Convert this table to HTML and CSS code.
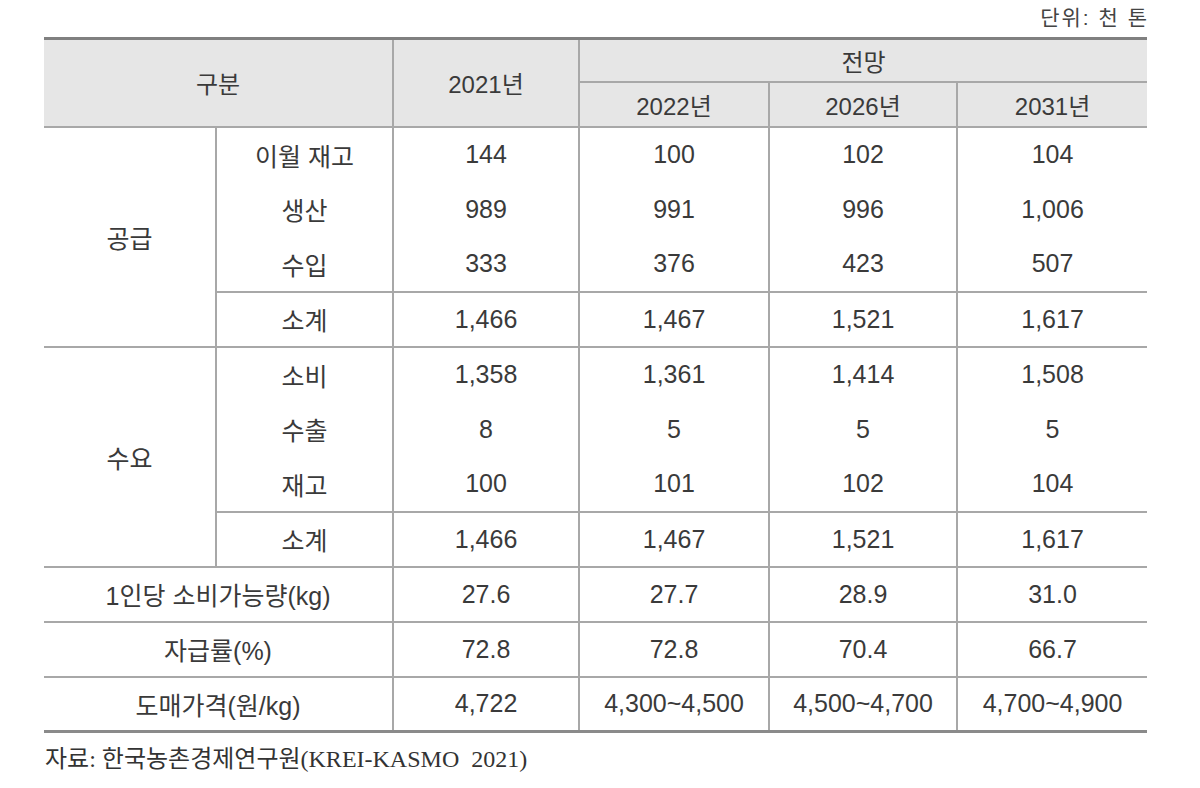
FILE: index.html
```html
<!DOCTYPE html>
<html lang="ko">
<head>
<meta charset="utf-8">
<title>수급 전망</title>
<link rel="stylesheet" href="styles.css">
</head>
<body>
<div class="page">
  <div class="unit">단위: 천 톤</div>
  <table class="grid">
    <colgroup>
      <col class="c1"><col class="c2"><col class="c3"><col class="c4"><col class="c5"><col class="c6">
    </colgroup>
    <thead>
      <tr class="h1">
        <th colspan="2" rowspan="2">구분</th>
        <th rowspan="2">2021년</th>
        <th colspan="3">전망</th>
      </tr>
      <tr class="h2">
        <th>2022년</th>
        <th>2026년</th>
        <th>2031년</th>
      </tr>
    </thead>
    <tbody>
      <tr class="in">
        <td rowspan="4" class="grp">공급</td>
        <td>이월 재고</td><td>144</td><td>100</td><td>102</td><td>104</td>
      </tr>
      <tr class="in"><td>생산</td><td>989</td><td>991</td><td>996</td><td>1,006</td></tr>
      <tr class="in last"><td>수입</td><td>333</td><td>376</td><td>423</td><td>507</td></tr>
      <tr class="sum"><td>소계</td><td>1,466</td><td>1,467</td><td>1,521</td><td>1,617</td></tr>
      <tr class="in">
        <td rowspan="4" class="grp">수요</td>
        <td>소비</td><td>1,358</td><td>1,361</td><td>1,414</td><td>1,508</td>
      </tr>
      <tr class="in"><td>수출</td><td>8</td><td>5</td><td>5</td><td>5</td></tr>
      <tr class="in last"><td>재고</td><td>100</td><td>101</td><td>102</td><td>104</td></tr>
      <tr class="sum"><td>소계</td><td>1,466</td><td>1,467</td><td>1,521</td><td>1,617</td></tr>
      <tr class="row"><td colspan="2" class="lead">1인당 소비가능량(kg)</td><td>27.6</td><td>27.7</td><td>28.9</td><td>31.0</td></tr>
      <tr class="row"><td colspan="2" class="lead">자급률(%)</td><td>72.8</td><td>72.8</td><td>70.4</td><td>66.7</td></tr>
      <tr class="row"><td colspan="2" class="lead">도매가격(원/kg)</td><td>4,722</td><td>4,300~4,500</td><td>4,500~4,700</td><td>4,700~4,900</td></tr>
    </tbody>
  </table>
  <p class="source">자료: 한국농촌경제연구원(KREI-KASMO&nbsp; 2021)</p>
</div>
</body>
</html>
```

FILE: styles.css
```css
html, body {
  margin: 0;
  padding: 0;
  background: #ffffff;
}

.page {
  width: 1103px;
  padding-left: 44px;
  color: #3a3a3a;
  font-family: "Liberation Sans", "Noto Sans CJK KR", sans-serif;
}

.unit {
  height: 37px;
  line-height: 36px;
  text-align: right;
  font-size: 21px;
  letter-spacing: 2px;
  margin-right: -2px;
  color: #444;
}

.grid {
  width: 1103px;
  border-collapse: collapse;
  table-layout: fixed;
  border-top: 3px solid #808080;
  border-bottom: 3px solid #8a8a8a;
  font-size: 25px;
}

.c1 { width: 172px; }
.c2 { width: 177px; }
.c3 { width: 186px; }
.c4 { width: 190px; }
.c5 { width: 188px; }
.c6 { width: 190px; }

.grid th,
.grid td {
  padding: 0;
  text-align: center;
  vertical-align: middle;
  border: 2px solid #a8a8a8;
  font-weight: normal;
}

.grid tr > :first-child { border-left: none; }
.grid tr > :last-child { border-right: none; }

.grid thead th {
  background: #e6e6e6;
  font-size: 24px;
}

.grid .h1 { height: 43px; }
.grid .h2 { height: 45px; }

.grid tbody tr { height: 55px; }

.grid tr.in td { border-bottom: none; border-top: none; }
.grid tr.in td.grp { border-bottom: 2px solid #a8a8a8; border-top: 2px solid #a8a8a8; border-left: none; }
.grid tr.in.last td { border-bottom: 2px solid #a8a8a8; }
.grid tbody tr:first-child td { border-top: 2px solid #a8a8a8; }

.grid td.grp { border-left: none; }
.grid tr.sum td:first-child { border-left: 2px solid #a8a8a8; }

.source {
  margin: 12px 0 0 1px;
  font-family: "Liberation Serif", "Noto Sans CJK KR", serif;
  font-size: 24px;
  line-height: 28px;
  color: #333;
}
```
